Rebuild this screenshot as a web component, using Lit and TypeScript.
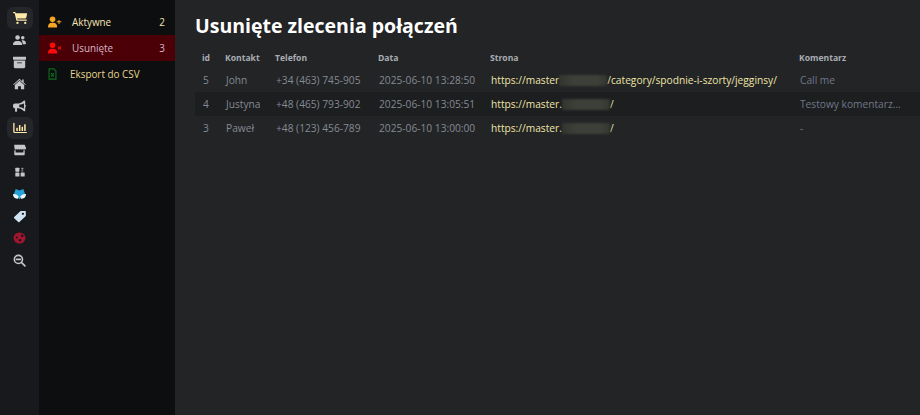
import { LitElement, html, css, svg } from "lit";
import { customElement } from "lit/decorators.js";

const I = (vb: string, fill: string, body: any, w = 14, h = 14) =>
  html`<svg width="${w}" height="${h}" viewBox="${vb}" fill="${fill}" preserveAspectRatio="none">${body}</svg>`;

const G = "#c4c6ca";
const rail = [
  { a: true, i: I("0 0 576 512", "#ffe9a8", svg`<path d="M0 24C0 11 11 0 24 0h45c23 0 43 16 47 38l2 10h434c20 0 35 19 30 39l-40 160c-4 14-17 25-32 25H171l9 48h372c13 0 24 11 24 24s-11 24-24 24H160c-12 0-21-8-24-20L69 48H24C11 48 0 37 0 24z"/><circle cx="184" cy="464" r="48"/><circle cx="504" cy="464" r="48"/>`, 14, 12) },
  { i: I("0 0 640 512", G, svg`<circle cx="224" cy="128" r="112"/><path d="M0 480c0-98 80-176 178-176h92c98 0 178 78 178 176 0 17-13 30-30 30H30C13 510 0 497 0 480z"/><circle cx="480" cy="144" r="88"/><path d="M480 270c88 0 160 60 160 170 0 18-14 30-32 30H480c0-80-20-140-60-190 18-6 38-10 60-10z"/>`, 13, 10) },
  { i: I("0 0 512 512", G, svg`<path d="M16 32h480c9 0 16 7 16 16v80c0 9-7 16-16 16H16c-9 0-16-7-16-16V48c0-9 7-16 16-16z"/><path d="M32 176h448v256c0 26-22 48-48 48H80c-26 0-48-22-48-48V176zm128 80v32h192v-32H160z" fill-rule="evenodd"/>`, 13, 13) },
  { i: I("0 0 576 512", G, svg`<path d="M288 32 8 272l24 28L288 80l256 220 24-28-96-82V64h-64v72L288 32z"/><path d="M288 120 80 300v164c0 9 7 16 16 16h128V352h128v128h128c9 0 16-7 16-16V300L288 120z"/>`, 13, 12) },
  { i: I("0 0 512 512", G, svg`<path d="M480 32v448l-44 0-76-64c-50-42-110-64-176-64h-24v128c0 9-7 16-16 16H96c-9 0-16-7-16-16V352c-44 0-80-36-80-80v-48c0-44 36-80 80-80h104c66 0 126-22 176-64l76-64 44 16zm-48 108c-52 42-116 58-184 60v112c68 2 132 18 184 60V140z" fill-rule="evenodd"/><path d="M480 200c18 8 32 30 32 56s-14 48-32 56V200z"/>`, 13, 12) },
  { a: true, i: I("0 0 512 512", "#ffe9a8", svg`<path d="M32 32c13 0 24 11 24 24v344c0 13 11 24 24 24h408c13 0 24 11 24 24s-11 24-24 24H80c-40 0-72-32-72-72V56c0-13 11-24 24-24z"/><rect x="120" y="240" width="56" height="144" rx="12"/><rect x="216" y="128" width="56" height="256" rx="12"/><rect x="312" y="200" width="56" height="184" rx="12"/><rect x="408" y="96" width="56" height="288" rx="12"/>`, 14, 12) },
  { i: I("0 0 640 512", G, svg`<path d="M80 32h480c10 0 20 6 24 16l56 112v16c0 30-26 56-56 56-18 0-34-8-44-22-10 14-28 22-46 22s-34-8-46-22c-10 14-28 22-46 22s-34-8-46-22c-12 14-28 22-46 22s-34-8-46-22c-10 14-28 22-46 22s-34-8-46-22c-10 14-26 22-44 22-30 0-56-26-56-56v-16L56 48c4-10 14-16 24-16z"/><path d="M64 264v168c0 26 22 48 48 48h416c26 0 48-22 48-48V264h-64v96H128v-96H64z"/>`, 13, 12) },
  { i: I("0 0 512 512", G, svg`<rect x="16" y="32" width="208" height="208" rx="30"/><rect x="16" y="280" width="208" height="208" rx="30"/><rect x="288" y="280" width="208" height="208" rx="30"/><rect x="330" y="40" width="90" height="90" rx="20" opacity=".75"/><rect x="330" y="160" width="90" height="70" rx="16" opacity=".75"/>`, 10, 10) },
  { i: I("0 0 24 24", "#25a3d8", svg`<path d="M5 0l7 3 7-3 3 10-10 13L2 10z"/><path d="M0 11c4-1 8 1 10.500 5L9 21c-5 1-9-3-9-10zM24 11c-4-1-8 1-10.500 5L15 21c5 1 9-3 9-10z" fill="#eaf6fb"/>`, 13, 11) },
  { i: I("0 0 24 24", "#cfe2f2", svg`<path d="M13 2h8c.6 0 1 .4 1 1v8L11 22c-.6.6-1.400.6-2 0l-7-7c-.6-.6-.6-1.400 0-2L13 2zm4 3a2 2 0 1 0 0 4 2 2 0 0 0 0-4z" fill-rule="evenodd"/>`, 14, 13) },
  { i: I("0 0 24 24", "#a3152f", svg`<path d="M12 1a11 11 0 1 0 0 22 11 11 0 0 0 0-22zm5 4a2.500 2.500 0 1 1 0 5 2.500 2.500 0 0 1 0-5zM7 9a2 2 0 1 1 0 4 2 2 0 0 1 0-4zm6 5a2.500 2.500 0 1 1 0 5 2.500 2.500 0 0 1 0-5z" fill-rule="evenodd"/>`, 13, 12) },
  { i: I("0 0 24 24", "none", svg`<circle cx="10" cy="10" r="7.500" stroke="${G}" stroke-width="3"/><path d="M6.500 10h7M15.500 15.500 22 22" stroke="${G}" stroke-width="3" stroke-linecap="round"/>`, 13, 13) },
];

const userIco = (c: string, extra: any) =>
  html`<svg width="14" height="12" viewBox="0 0 20 16" fill="${c}"><circle cx="6.500" cy="4.200" r="4"/><path d="M0 15c0-4 2.500-6 5-6h3c2.500 0 5 2 5 6 0 .6-.4 1-1 1H1c-.6 0-1-.4-1-1z"/>${extra}</svg>`;

const rows = [
  { id: 5, n: "John", t: "+34 (463) 745-905", d: "2025-06-10 13:28:50", pre: "https://master", blur: 48, post: "/category/spodnie-i-szorty/jegginsy/", c: "Call me" },
  { id: 4, n: "Justyna", t: "+48 (465) 793-902", d: "2025-06-10 13:05:51", pre: "https://master.", blur: 48, post: "/", c: "Testowy komentarz..." },
  { id: 3, n: "Paweł", t: "+48 (123) 456-789", d: "2025-06-10 13:00:00", pre: "https://master.", blur: 48, post: "/", c: "-" },
];

@customElement("app-root")
export class AppRoot extends LitElement {
  static styles = css`
    :host { display: flex; width: 920px; height: 415px; overflow: hidden; background: #222426; font-family: "Open Sans", sans-serif; }
    .rail { width: 39px; flex: none; background: #17191c; display: flex; flex-direction: column; align-items: center; padding-top: 7px; box-sizing: border-box; }
    .ri { width: 26px; height: 22px; flex: none; display: flex; align-items: center; justify-content: center; border-radius: 6px; }
    .ri.a { background: #24262a; }
    .side { width: 136px; flex: none; background: #0d0e10; padding-top: 9px; box-sizing: border-box; }
    .item { height: 26px; display: flex; align-items: center; padding: 0 10px 0 9px; font-size: 9.900px; color: #f5e3b5; }
    .item.on { background: #4a0006; color: #d9b8c8; }
    .item .ico { width: 24px; flex: none; display: flex; align-items: center; }
    .item .lbl { flex: 1; }
    .item.exp { color: #e8d68f; }
    .item.exp .ico { width: 22px; }
    .main { flex: 1; min-width: 0; padding: 11px 0 0 20px; box-sizing: border-box; }
    h1 { margin: 0 0 7px; font-size: 19.500px; line-height: 30px; font-weight: 700; color: #fff; }
    .tbl { display: grid; grid-template-columns: 30px 50px 103px 112px 309px 1fr; }
    .h { font-size: 8.600px; font-weight: 700; color: #a9adb3; height: 20px; display: flex; align-items: center; padding-left: 0; }
    .h:first-child { padding-left: 7px; }
    .c { height: 24px; display: flex; align-items: center; padding-left: 1px; font-size: 10.200px; color: #858a93; white-space: nowrap; overflow: hidden; }
    .c.first { padding-left: 8px; }
    .alt { background: #1c1e20; }
    .url { color: #f0e5a8; }
    .blur { display: inline-block; height: 11px; background: linear-gradient(90deg, #33362f, #3d4038 30%, #3d4038 80%, #34362f); filter: blur(1px); }
    .com { color: #717789; }
  `;
  render() {
    return html`
      <div class="rail">
        ${rail.map((r) => html`<div class="ri ${r.a ? "a" : ""}">${r.i}</div>`)}
      </div>
      <div class="side">
        <div class="item">
          <span class="ico">${userIco("#f5a623", svg`<path d="M15 5h1.500v2H19v1.500h-2.500V11H15V8.500h-2.500V7H15z"/>`)}</span>
          <span class="lbl">Aktywne</span><span>2</span>
        </div>
        <div class="item on">
          <span class="ico">${userIco("#ff0a0a", svg`<path d="M15 5.500l1.500 1.500 1.500-1.500 1 1-1.500 1.500 1.500 1.500-1 1-1.500-1.500-1.500 1.500-1-1 1.500-1.500-1.500-1.500z"/>`)}</span>
          <span class="lbl">Usunięte</span><span>3</span>
        </div>
        <div class="item exp">
          <span class="ico"><svg width="9" height="12" viewBox="0 0 10 14" fill="none" stroke="#0f6b1e" stroke-width="1.300"><path d="M1 1h5.500L9 3.500V13H1z"/><path d="M3.500 6l3 4M6.500 6l-3 4"/></svg></span>
          <span class="lbl">Eksport do CSV</span>
        </div>
      </div>
      <div class="main">
        <h1>Usunięte zlecenia połączeń</h1>
        <div class="tbl">
          ${["id", "Kontakt", "Telefon", "Data", "Strona", "Komentarz"].map((h) => html`<div class="h">${h}</div>`)}
          ${rows.map((r, i) => {
            const a = i === 1 ? "alt" : "";
            return html`
              <div class="c first ${a}">${r.id}</div>
              <div class="c ${a}">${r.n}</div>
              <div class="c ${a}">${r.t}</div>
              <div class="c ${a}">${r.d}</div>
              <div class="c url ${a}">${r.pre}<span class="blur" style="width:${r.blur}px"></span>${r.post}</div>
              <div class="c com ${a}">${r.c}</div>`;
          })}
        </div>
      </div>
    `;
  }
}
